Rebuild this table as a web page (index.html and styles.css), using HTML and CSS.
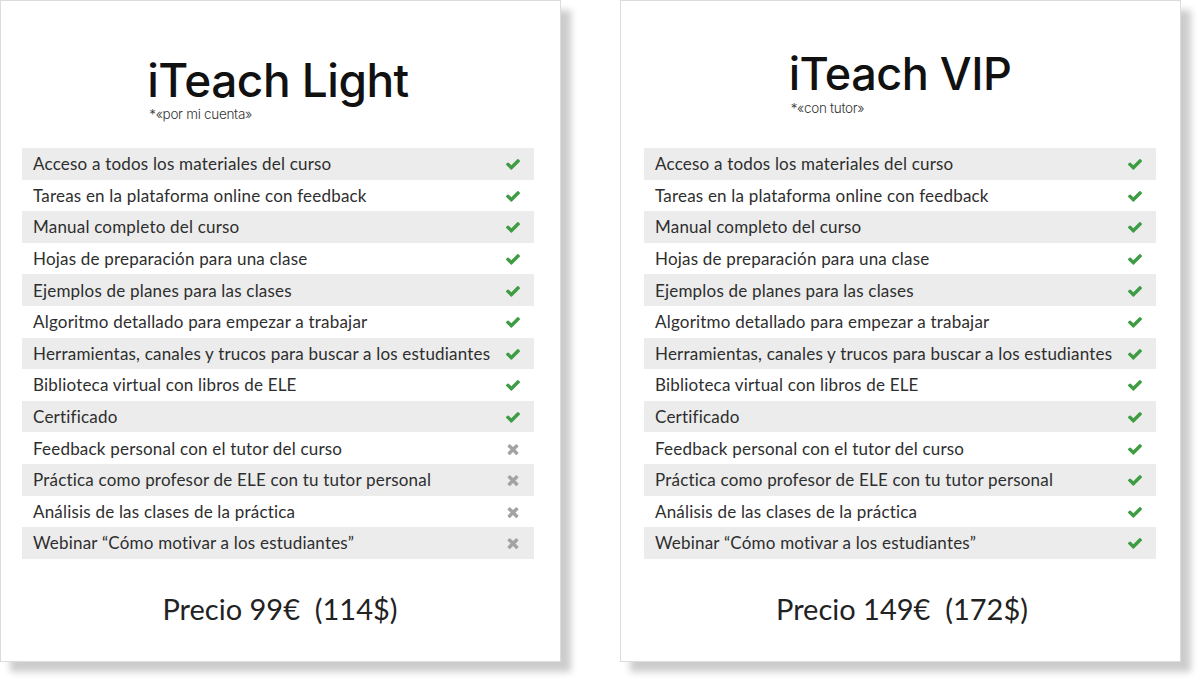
FILE: index.html
```html
<!DOCTYPE html>
<html lang="es">
<head>
<meta charset="utf-8">
<title>iTeach</title>
<link rel="stylesheet" href="styles.css">
</head>
<body>
<svg width="0" height="0" class="defs">
  <defs>
    <symbol id="ok" viewBox="121 420 1550 1020"><path d="M1671 566q0 40-28 68l-724 724-136 136q-28 28-68 28t-68-28l-136-136-362-362q-28-28-28-68t28-68l136-136q28-28 68-28t68 28l294 295 656-657q28-28 68-28t68 28l136 136q28 28 28 68z"/></symbol>
    <symbol id="no" viewBox="100 345 1210 1210"><path d="M1298 1322q0 40-28 68l-136 136q-28 28-68 28t-68-28l-294-294-294 294q-28 28-68 28t-68-28l-136-136q-28-28-28-68t28-68l294-294-294-294q-28-28-28-68t28-68l136-136q28-28 68-28t68 28l294 294 294-294q28-28 68-28t68 28l136 136q28 28 28 68t-28 68l-294 294 294 294q28 28 28 68z"/></symbol>
  </defs>
</svg>
<main class="plans">
  <section class="card card--light">
    <header class="head">
      <div class="title-wrap">
        <h1 class="title">iTeach Light</h1>
        <p class="sub">*«por mi cuenta»</p>
      </div>
    </header>
    <ul class="features">
      <li class="row"><span>Acceso a todos los materiales del curso</span><svg class="ico ok"><use href="#ok"/></svg></li>
      <li class="row"><span>Tareas en la plataforma online con feedback</span><svg class="ico ok"><use href="#ok"/></svg></li>
      <li class="row"><span>Manual completo del curso</span><svg class="ico ok"><use href="#ok"/></svg></li>
      <li class="row"><span>Hojas de preparación para una clase</span><svg class="ico ok"><use href="#ok"/></svg></li>
      <li class="row"><span>Ejemplos de planes para las clases</span><svg class="ico ok"><use href="#ok"/></svg></li>
      <li class="row"><span>Algoritmo detallado para empezar a trabajar</span><svg class="ico ok"><use href="#ok"/></svg></li>
      <li class="row"><span>Herramientas, canales y trucos para buscar a los estudiantes</span><svg class="ico ok"><use href="#ok"/></svg></li>
      <li class="row"><span>Biblioteca virtual con libros de ELE</span><svg class="ico ok"><use href="#ok"/></svg></li>
      <li class="row"><span>Certificado</span><svg class="ico ok"><use href="#ok"/></svg></li>
      <li class="row"><span>Feedback personal con el tutor del curso</span><svg class="ico no"><use href="#no"/></svg></li>
      <li class="row"><span>Práctica como profesor de ELE con tu tutor personal</span><svg class="ico no"><use href="#no"/></svg></li>
      <li class="row"><span>Análisis de las clases de la práctica</span><svg class="ico no"><use href="#no"/></svg></li>
      <li class="row"><span>Webinar “Cómo motivar a los estudiantes”</span><svg class="ico no"><use href="#no"/></svg></li>
    </ul>
    <p class="price">Precio 99€&nbsp; (114$)</p>
  </section>
  <section class="card card--vip">
    <header class="head">
      <div class="title-wrap">
        <h1 class="title">iTeach VIP</h1>
        <p class="sub">*«con tutor»</p>
      </div>
    </header>
    <ul class="features">
      <li class="row"><span>Acceso a todos los materiales del curso</span><svg class="ico ok"><use href="#ok"/></svg></li>
      <li class="row"><span>Tareas en la plataforma online con feedback</span><svg class="ico ok"><use href="#ok"/></svg></li>
      <li class="row"><span>Manual completo del curso</span><svg class="ico ok"><use href="#ok"/></svg></li>
      <li class="row"><span>Hojas de preparación para una clase</span><svg class="ico ok"><use href="#ok"/></svg></li>
      <li class="row"><span>Ejemplos de planes para las clases</span><svg class="ico ok"><use href="#ok"/></svg></li>
      <li class="row"><span>Algoritmo detallado para empezar a trabajar</span><svg class="ico ok"><use href="#ok"/></svg></li>
      <li class="row"><span>Herramientas, canales y trucos para buscar a los estudiantes</span><svg class="ico ok"><use href="#ok"/></svg></li>
      <li class="row"><span>Biblioteca virtual con libros de ELE</span><svg class="ico ok"><use href="#ok"/></svg></li>
      <li class="row"><span>Certificado</span><svg class="ico ok"><use href="#ok"/></svg></li>
      <li class="row"><span>Feedback personal con el tutor del curso</span><svg class="ico ok"><use href="#ok"/></svg></li>
      <li class="row"><span>Práctica como profesor de ELE con tu tutor personal</span><svg class="ico ok"><use href="#ok"/></svg></li>
      <li class="row"><span>Análisis de las clases de la práctica</span><svg class="ico ok"><use href="#ok"/></svg></li>
      <li class="row"><span>Webinar “Cómo motivar a los estudiantes”</span><svg class="ico ok"><use href="#ok"/></svg></li>
    </ul>
    <p class="price">Precio 149€&nbsp; (172$)</p>
  </section>
</main>
</body>
</html>
```
FILE: styles.css
```css
* { box-sizing: border-box; }
html, body { margin: 0; padding: 0; background: #fff; }
body { width: 1200px; height: 683px; overflow: hidden; font-family: "Lato", "Liberation Sans", sans-serif; }
.defs { position: absolute; width: 0; height: 0; }

.plans {
  display: flex;
  gap: 59px;
}

.card {
  width: 561px;
  height: 662px;
  background: #fff;
  border: 1px solid #dcdcdc;
  box-shadow: 10px 10px 7px rgba(0, 0, 0, 0.2);
  padding: 0 26px 0 21px;
  display: flex;
  flex-direction: column;
}
.card--vip { padding-left: 23px; padding-right: 24px; }

.head {
  height: 147px;
  display: flex;
  justify-content: center;
}
.card--light .head { padding-top: 57px; }
.card--vip .head { padding-top: 51px; }

.title {
  margin: 0;
  font-family: "Inter", "Liberation Sans", sans-serif;
  font-weight: 500;
  font-size: 46px;
  line-height: 44px;
  letter-spacing: -0.5px;
  color: #111;
}
.card--vip .title { font-size: 45px; }

.sub {
  margin: 5px 0 0 2px;
  font-family: "Inter", "Liberation Sans", sans-serif;
  font-weight: 300;
  font-size: 13.5px;
  line-height: 14px;
  letter-spacing: -0.3px;
  color: #333;
}

.features {
  list-style: none;
  margin: 0;
  padding: 0;
}
.row {
  height: 31.6px;
  display: flex;
  align-items: center;
  justify-content: space-between;
  padding: 0 14px 0 11px;
  font-size: 17px;
  letter-spacing: 0.2px;
  color: #2e2e2e;
}
.row:nth-child(odd) { background: #ebeceb; }

.ico { flex: none; }
.ico.ok { width: 14px; height: 11px; fill: #3e9c42; margin-top: 2px; }
.ico.no { width: 12px; height: 11px; fill: #a3a3a3; margin-right: 1px; margin-top: 2px; }

.price {
  margin: 32px 0 0;
  text-align: center;
  font-size: 29px;
  color: #222;
  padding-left: 4px;
}
```
